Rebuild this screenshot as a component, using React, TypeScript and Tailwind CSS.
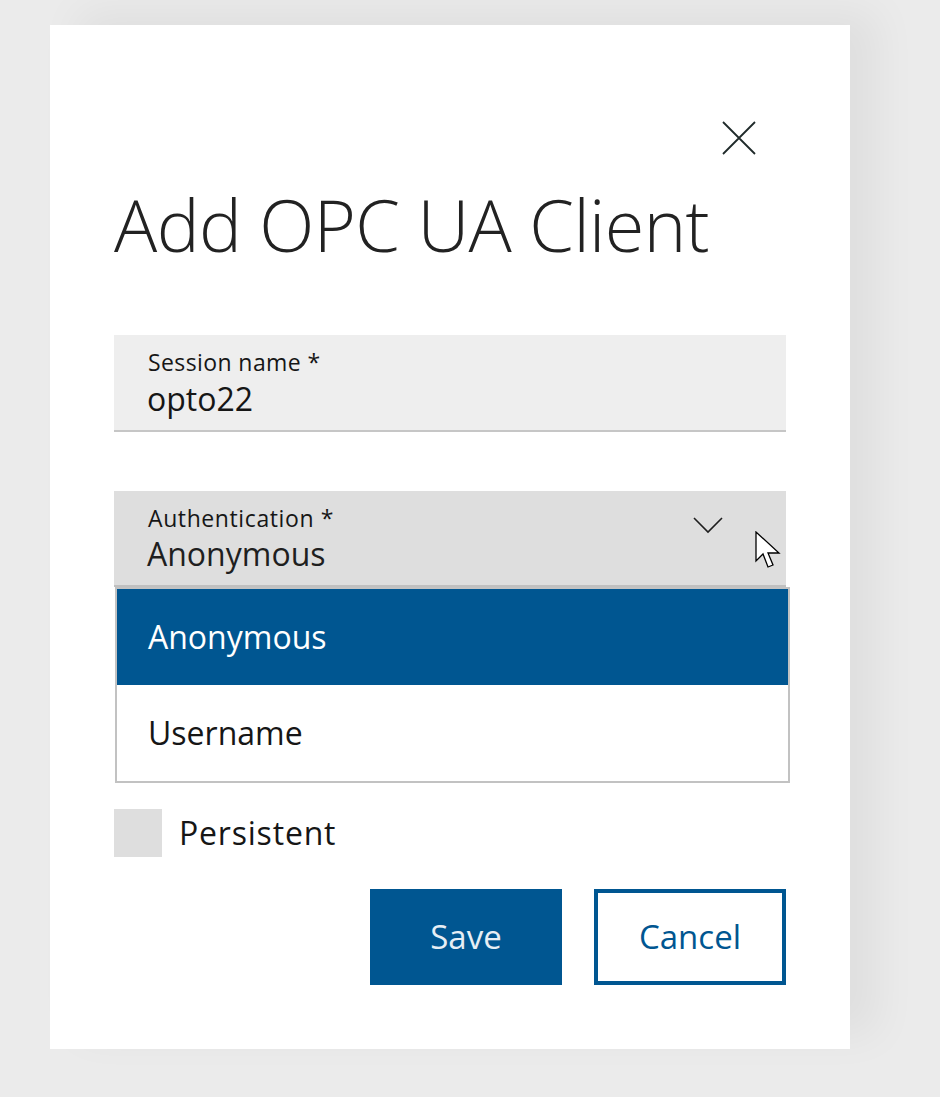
import { useState } from "react";

const Chevron = () => (
  <svg width="32" height="20" viewBox="0 0 32 20" fill="none">
    <path d="M2 3 L16 17 L30 3" stroke="#1f1f1f" strokeWidth="1.6" />
  </svg>
);

const CloseIcon = () => (
  <svg width="34" height="34" viewBox="0 0 34 34" fill="none">
    <path d="M1 1 L33 33 M33 1 L1 33" stroke="#1f2a2a" strokeWidth="1.8" />
  </svg>
);

const Pointer = () => (
  <svg width="27" height="40" viewBox="0 0 27 40">
    <path
      d="M1 1 L1 30 L8 23 L13 36 L18 34 L13 22 L24 22 Z"
      fill="#ffffff"
      stroke="#000000"
      strokeWidth="1.3"
      strokeLinejoin="miter"
    />
  </svg>
);

const App = () => {
  const [persistent, setPersistent] = useState(false);
  const options = ["Anonymous", "Username"];

  return (
    <div
      className="w-[940px] h-[1097px] bg-[#ebebeb] pt-[25px] pl-[50px]"
      style={{ fontFamily: '"Open Sans", "Noto Sans", sans-serif' }}
    >
      <div className="w-[800px] h-[1024px] bg-white px-[64px] flex flex-col shadow-[28px_-14px_40px_rgba(0,0,0,0.05)]">
        <div className="flex justify-end pt-[96px] pr-[30px]">
          <button className="w-[34px] h-[34px]">
            <CloseIcon />
          </button>
        </div>

        <h1 className="mt-[29px] text-[72px] leading-[80px] font-light text-[#222222] tracking-[-0.6px]">
          Add OPC UA Client
        </h1>

        <div className="mt-[71px] w-[672px] h-[97px] bg-[#eeeeee] border-b-2 border-[#c6c6c6] pl-[34px] pt-[11px] flex flex-col">
          <span className="text-[23px] leading-[32px] text-[#161616] tracking-[0.4px]">Session name *</span>
          <span className="text-[32px] leading-[42px] text-[#161616] -ml-[1px]">opto22</span>
        </div>

        <div className="relative mt-[59px] w-[672px] h-[96px] bg-[#dedede] border-b-2 border-[#c0c0c0] pl-[34px] pt-[11px] flex">
          <div className="flex flex-col flex-1">
            <span className="text-[23px] leading-[32px] text-[#161616] tracking-[0.6px]">Authentication *</span>
            <span className="text-[32px] leading-[40px] text-[#1f1f1f] -ml-[1px]">Anonymous</span>
          </div>
          <div className="pt-[13px] pr-[62px]">
            <Chevron />
          </div>
          <div className="absolute left-[641px] top-[40px]">
            <Pointer />
          </div>
        </div>

        <div className="w-[675px] ml-[1px] border-2 border-[#c2c2c2] flex flex-col">
          {options.map((o, i) => (
            <div
              key={o}
              className={`h-[96px] flex items-center pl-[31px] text-[32px] ${
                i === 0 ? "bg-[#005691] text-white" : "bg-white text-[#161616]"
              }`}
            >
              {o}
            </div>
          ))}
        </div>

        <label className="mt-[26px] flex items-center gap-[17px] cursor-pointer">
          <span
            onClick={() => setPersistent(!persistent)}
            className="w-[48px] h-[48px] bg-[#dedede] block"
          />
          <span className="text-[32px] text-[#161616] tracking-[0.8px]">Persistent</span>
        </label>

        <div className="mt-[32px] flex justify-end gap-[32px]">
          <button className="w-[192px] h-[96px] bg-[#005691] text-[#e6eef5] text-[33px]">
            Save
          </button>
          <button className="w-[192px] h-[96px] border-[4px] border-[#005691] text-[#005691] text-[33px] bg-white">
            Cancel
          </button>
        </div>
      </div>
    </div>
  );
};

export default App;
